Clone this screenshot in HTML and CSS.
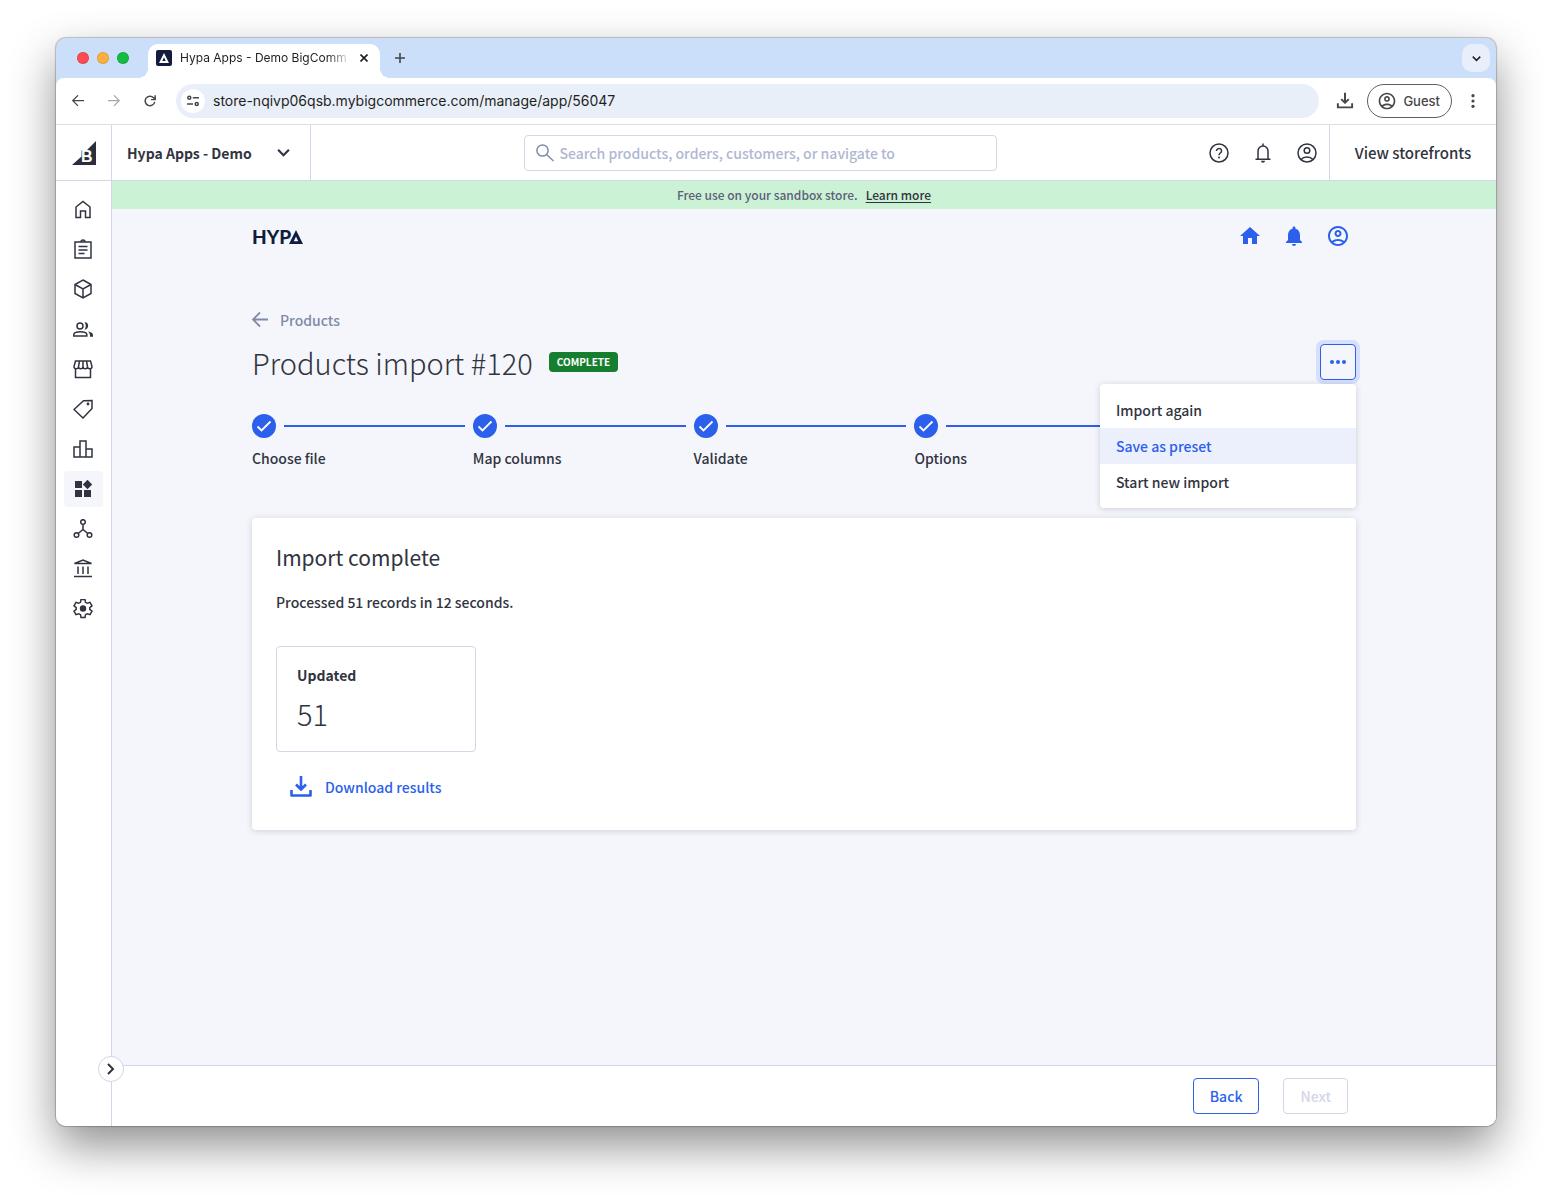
FILE: index.html
```html
<!DOCTYPE html>
<html lang="en">
<head>
<meta charset="utf-8">
<meta name="viewport" content="width=device-width, initial-scale=1">
<title>Hypa Apps - Demo BigCommerce</title>
<link rel="stylesheet" href="styles.css">
</head>
<body>
<svg class="sprite" aria-hidden="true">
  <symbol id="i-account" viewBox="0 0 24 24"><path fill="currentColor" d="M12 2C6.480 2 2 6.480 2 12s4.480 10 10 10 10-4.480 10-10S17.520 2 12 2zM7.350 18.500C8.660 17.560 10.260 17 12 17s3.340.56 4.650 1.500C15.340 19.440 13.740 20 12 20s-3.340-.56-4.650-1.500zm10.790-1.380C16.450 15.800 14.320 15 12 15s-4.450.8-6.140 2.120C4.700 15.730 4 13.950 4 12c0-4.420 3.580-8 8-8s8 3.580 8 8c0 1.950-.7 3.730-1.860 5.120zM12 6c-1.930 0-3.500 1.570-3.500 3.500S10.070 13 12 13s3.500-1.570 3.500-3.500S13.930 6 12 6zm0 5c-.83 0-1.500-.67-1.500-1.500S11.170 8 12 8s1.500.67 1.500 1.500S12.830 11 12 11z"/></symbol>
  <symbol id="i-download" viewBox="0 0 24 24"><path d="M12 1v13M7 9.500l5 5 5-5M2.500 15v5.500h19V15" fill="none" stroke="currentColor" stroke-width="2.600" stroke-linejoin="round"/></symbol>
  <symbol id="i-back" viewBox="0 0 16 16"><path d="M16 7.500H1.500M8 .5L1 7.500l7 7" fill="none" stroke="currentColor" stroke-width="1.800"/></symbol>
  <symbol id="i-check" viewBox="0 0 24 24"><circle cx="12" cy="12" r="12" fill="#2b5fec"/><path d="M5.500 12.500l4 4L18.500 7.500" fill="none" stroke="#fff" stroke-width="1.800"/></symbol>
  <symbol id="i-down" viewBox="0 0 12 12"><path d="M1 3.500l5 5 5-5" fill="none" stroke="currentColor" stroke-width="2"/></symbol>
</svg>
<div class="window">
  <div class="tabstrip">
    <div class="lights"><span class="light red"></span><span class="light amber"></span><span class="light green"></span></div>
    <div class="tab">
      <svg class="favicon" width="16" height="16" viewBox="0 0 16 16" aria-hidden="true"><rect width="16" height="16" rx="2" fill="#121c3e"/><path d="M8 3l5 10H3zM8 7.200L6.300 11h3.400z" fill="#fff" fill-rule="evenodd"/></svg>
      <span class="tab-title">Hypa Apps - Demo BigComm</span>
      <button class="icon-btn tab-close" aria-label="Close tab"><svg width="8" height="8" viewBox="0 0 8 8"><path d="M.5.5l7 7M7.500.5l-7 7" stroke="currentColor" stroke-width="1.600"/></svg></button>
    </div>
    <button class="icon-btn new-tab" aria-label="New tab"><svg width="10" height="10" viewBox="0 0 10 10"><path d="M5 0v10M0 5h10" stroke="currentColor" stroke-width="1.600"/></svg></button>
    <button class="icon-btn tab-search" aria-label="Search tabs"><svg width="9" height="9"><use href="#i-down"/></svg></button>
  </div>

  <div class="toolbar">
    <div class="nav-btns">
      <button class="icon-btn" aria-label="Back"><svg width="12" height="12"><use href="#i-back"/></svg></button>
      <button class="icon-btn faded flip" aria-label="Forward"><svg width="12" height="12"><use href="#i-back"/></svg></button>
      <button class="icon-btn" aria-label="Reload"><svg width="12" height="12" viewBox="0 0 13 13"><path d="M11.600 7.500A5.200 5.200 0 1 1 10.300 2.900L12 4.700M12.100.3v4.700H7.500" fill="none" stroke="currentColor" stroke-width="1.600"/></svg></button>
    </div>
    <label class="address">
      <span class="site-info"><svg width="12" height="12" viewBox="0 0 12 12"><g fill="none" stroke="currentColor" stroke-width="1.500"><circle cx="2.300" cy="2.800" r="1.500"/><path d="M5.800 2.800H12M0 9h6"/><circle cx="9.700" cy="9" r="1.500"/></g></svg></span>
      <input class="url" type="text" aria-label="Address" value="store-nqivp06qsb.mybigcommerce.com/manage/app/56047">
    </label>
    <button class="icon-btn downloads" aria-label="Downloads"><svg width="18" height="18"><use href="#i-download"/></svg></button>
    <button class="guest"><svg width="20" height="20"><use href="#i-account"/></svg>Guest</button>
    <button class="icon-btn kebab" aria-label="Menu"><svg width="4" height="14" viewBox="0 0 4 14"><g fill="currentColor"><circle cx="2" cy="1.700" r="1.600"/><circle cx="2" cy="7" r="1.600"/><circle cx="2" cy="12.300" r="1.600"/></g></svg></button>
  </div>

  <header class="appbar">
    <a class="bc-logo" href="#" aria-label="BigCommerce"><svg width="24" height="24" viewBox="0 0 24 24"><path d="M24 0v24H0l9.500-8.500V9.500h5z" fill="#2c2f3b"/><text x="9" y="21" class="bc-letter">B</text></svg></a>
    <button class="store">Hypa Apps - Demo<svg width="13" height="13" viewBox="0 0 12 12"><use href="#i-down"/></svg></button>
    <div class="search-wrap">
      <label class="search"><svg width="18" height="18" viewBox="0 0 18 18"><g fill="none" stroke="currentColor" stroke-width="1.500"><circle cx="6.500" cy="6.500" r="5.600"/><path d="M10.500 10.500l7 6.500"/></g></svg><input type="text" aria-label="Search" placeholder="Search products, orders, customers, or navigate to"></label>
    </div>
    <div class="appbar-icons">
      <button class="icon-btn" aria-label="Help"><svg width="20" height="20" viewBox="0 0 20 20"><g fill="none" stroke="currentColor" stroke-width="1.500"><circle cx="10" cy="10" r="9"/><path d="M7.500 8a2.500 2.500 0 1 1 3.900 2c-.9.700-1.400 1.100-1.400 2.200"/></g><circle cx="10" cy="14.500" r="1" fill="currentColor"/></svg></button>
      <button class="icon-btn" aria-label="Notifications"><svg width="16" height="20" viewBox="0 0 16 20"><path d="M.5 16.200h15M3 16V8a5 5 0 0 1 10 0v8M8 .5V3" fill="none" stroke="currentColor" stroke-width="1.500"/><path d="M6 17.700h4a2 2 0 0 1-4 0z" fill="currentColor"/></svg></button>
      <button class="icon-btn" aria-label="Account"><svg width="20" height="20" viewBox="0 0 20 20"><g fill="none" stroke="currentColor" stroke-width="1.500"><circle cx="10" cy="10" r="9"/><circle cx="10" cy="7.500" r="2.800"/><path d="M4 16.500c3-3.400 9-3.400 12 0"/></g></svg></button>
    </div>
    <a class="storefronts" href="#">View storefronts</a>
  </header>

  <div class="body">
    <nav class="sidebar" aria-label="Main">
      <a href="#" aria-label="Home"><svg width="20" height="20" viewBox="0 0 20 20"><path d="M3 8L10 2.500l7 5.500v10.500h-4.500V12h-5v6.500H3z"/></svg></a>
      <a href="#" aria-label="Orders"><svg width="20" height="20" viewBox="0 0 20 20"><path d="M2 3h16v16H2zM5.500 7.500h9M5.500 11h9M5.500 14.500h6M8 3a2 2 0 0 1 4 0"/></svg></a>
      <a href="#" aria-label="Products"><svg width="20" height="20" viewBox="0 0 20 20"><path d="M10 1l8 4.500v9L10 19l-8-4.500v-9zM2 5.500l8 4.500 8-4.500M10 10v9"/></svg></a>
      <a href="#" aria-label="Customers"><svg width="22" height="20" viewBox="0 0 22 20"><circle cx="8" cy="7" r="3"/><path d="M1.800 17v-1.800c1.200-3.200 11.800-3.200 13 0V17z"/><path class="fill" d="M12.500 3.300c4.300-.8 5.500 6.800 0 7.400 1.700-2.200 1.700-5 0-7.400zM16 12.500c3 .5 5 1.500 5 3.500v1.800h-3c.3-2-.3-3.800-2-5.300z"/></svg></a>
      <a href="#" aria-label="Storefront"><svg width="20" height="20" viewBox="0 0 20 20"><path d="M2.500 10v8.500h15V10M2.500 2h15L19 7.500c0 3-4.500 3-4.500 0 0 3-4.500 3-4.500 0 0 3-4.500 3-4.500 0 0 3-4.500 3-4.500 0zM6.500 2l-1 5.500M10 2v5.500M13.500 2l1 5.500"/></svg></a>
      <a href="#" aria-label="Marketing"><svg width="20" height="20" viewBox="0 0 20 20"><path d="M10.500 1.800L19 1.500v8l-9 9.500-9-8.500z"/><circle class="fill" cx="15" cy="5" r="1.400"/></svg></a>
      <a href="#" aria-label="Analytics"><svg width="20" height="20" viewBox="0 0 20 20"><path d="M7 18H1V8h6M7 18V2h6v16zM13 10h6v8h-6"/></svg></a>
      <a href="#" class="active" aria-label="Apps" aria-current="page"><svg width="20" height="20" viewBox="0 0 20 20"><path class="fill" d="M2 2h7v7H2zM2 11h7v7H2zM11 11h7v7h-7zM14.500.8l4.700 4.700-4.700 4.700-4.700-4.700z"/></svg></a>
      <a href="#" aria-label="Channels"><svg width="20" height="20" viewBox="0 0 20 20"><circle cx="10" cy="3" r="2.300"/><circle cx="3.500" cy="16" r="2.300"/><circle cx="16.500" cy="16" r="2.300"/><path d="M10 5.500v5M5.200 14.500l4.800-4 4.800 4"/></svg></a>
      <a href="#" aria-label="Capital"><svg width="20" height="20" viewBox="0 0 20 20"><path d="M1 17.500h18M5 7.500V15M10 7.500V15M15 7.500V15M1.500 4.500L10 1l8.500 3.500z"/></svg></a>
      <a href="#" aria-label="Settings"><svg width="20" height="20" viewBox="0 0 20 20"><path d="M8 .5h4l.5 2.800 1.800 1 2.700-1 2 3.500-2.200 1.800v1.800l2.200 1.800-2 3.500-2.700-1-1.800 1-.5 2.800H8l-.5-2.800-1.800-1-2.700 1-2-3.500 2.200-1.800V8.600L1 6.800l2-3.500 2.700 1 1.800-1z"/><circle class="fill" cx="10" cy="9.500" r="3.200"/></svg></a>
      <button class="expand" aria-label="Expand menu"><svg width="8" height="12" viewBox="0 0 8 12"><path d="M1 1l5 5-5 5" fill="none" stroke="currentColor" stroke-width="2"/></svg></button>
    </nav>

    <div class="content">
      <div class="banner">Free use on your sandbox store. <a href="#">Learn more</a></div>
      <div class="container">
        <header class="brandbar">
          <a class="hypa" href="#" aria-label="Hypa">HYP<svg width="14" height="14" viewBox="0 0 14 14"><path d="M7 0l7 14H0zM7 6.500l-2.200 4.700h4.400z" fill="currentColor" fill-rule="evenodd"/></svg></a>
          <div class="brand-icons">
            <a href="#" aria-label="Home"><svg width="24" height="24" viewBox="0 0 24 24"><path d="M10 20v-6h4v6h5v-8h3L12 3 2 12h3v8z" fill="currentColor"/></svg></a>
            <a href="#" aria-label="Notifications"><svg width="24" height="24" viewBox="0 0 24 24"><path d="M12 22c1.100 0 2-.9 2-2h-4c0 1.100.9 2 2 2zm6-6v-5c0-3.070-1.630-5.640-4.500-6.320V4c0-.83-.67-1.500-1.500-1.500s-1.500.67-1.500 1.500v.68C7.640 5.360 6 7.920 6 11v5l-2 2v1h16v-1l-2-2z" fill="currentColor"/></svg></a>
            <a href="#" aria-label="Account"><svg width="24" height="24"><use href="#i-account"/></svg></a>
          </div>
        </header>

        <main>
          <a class="crumb" href="#"><svg width="16" height="16"><use href="#i-back"/></svg>Products</a>
          <div class="title-row">
            <h1>Products import #120</h1>
            <span class="badge">COMPLETE</span>
            <div class="actions">
              <button class="more" aria-label="More actions" aria-expanded="true"><svg width="16" height="4" viewBox="0 0 16 4"><g fill="currentColor"><circle cx="2" cy="2" r="2"/><circle cx="8" cy="2" r="2"/><circle cx="14" cy="2" r="2"/></g></svg></button>
              <div class="menu" role="menu">
                <button role="menuitem">Import again</button>
                <button role="menuitem" class="highlighted">Save as preset</button>
                <button role="menuitem">Start new import</button>
              </div>
            </div>
          </div>

          <ol class="steps">
            <li><span class="track"><svg width="24" height="24"><use href="#i-check"/></svg></span>Choose file</li>
            <li><span class="track"><svg width="24" height="24"><use href="#i-check"/></svg></span>Map columns</li>
            <li><span class="track"><svg width="24" height="24"><use href="#i-check"/></svg></span>Validate</li>
            <li><span class="track"><svg width="24" height="24"><use href="#i-check"/></svg></span>Options</li>
            <li><span class="track last"><svg width="24" height="24"><use href="#i-check"/></svg></span></li>
          </ol>

          <section class="card">
            <h2>Import complete</h2>
            <p>Processed 51 records in 12 seconds.</p>
            <div class="stat"><h3>Updated</h3><span class="stat-value">51</span></div>
            <button class="download"><svg width="24" height="24"><use href="#i-download"/></svg>Download results</button>
          </section>
        </main>
      </div>
      <footer class="footer">
        <div class="footer-inner">
          <button class="btn">Back</button>
          <button class="btn" disabled>Next</button>
        </div>
      </footer>
    </div>
  </div>
</div>
</body>
</html>
```
FILE: styles.css
```css
* { box-sizing: border-box; }

:root {
  --blue: #2b5fec;
  --ink: #313440;
  --line: #d3d6e6;
  --pale: #f4f6fc;
  --ui: "Noto Sans CJK SC", sans-serif;
  --chrome: Inter, sans-serif;
}

body {
  margin: 0;
  min-height: 100vh;
  padding: 38px 56px 74px;
  display: flex;
  background: #fff;
  color: var(--ink);
  font: 500 14px/20px var(--ui);
}

h1, h2, h3, p, ol { margin: 0; padding: 0; }
a { color: inherit; text-decoration: none; }
button, input { font: inherit; color: inherit; margin: 0; padding: 0; border: 0; background: none; outline: 0; }
svg { display: block; flex: none; }
.sprite { position: absolute; width: 0; height: 0; }

.window {
  flex: 1;
  min-width: 0;
  display: flex;
  flex-direction: column;
  border-radius: 10px;
  overflow: hidden;
  background: #cbdffb;
  box-shadow: 0 0 1px 1px rgba(0, 0, 0, .22), 0 20px 46px rgba(0, 0, 0, .44);
}

.icon-btn { display: flex; align-items: center; justify-content: center; }

/* Browser tabs */
.tabstrip {
  height: 40px;
  display: flex;
  align-items: center;
  padding: 0 6px 0 21px;
  font-family: var(--chrome);
  font-weight: 400;
}
.lights { display: flex; gap: 8px; margin-right: 19px; }
.light { width: 12px; height: 12px; border-radius: 50%; border: 1px solid rgba(0, 0, 0, .12); }
.red { background: #fe4c50; }
.amber { background: #feb03e; }
.green { background: #13bd40; }
.tab {
  position: relative;
  align-self: flex-end;
  width: 232px;
  height: 34px;
  padding: 0 11px 6px 8px;
  display: flex;
  align-items: center;
  gap: 8px;
  border-radius: 10px 10px 0 0;
  background: #fff;
}
.tab::before, .tab::after {
  content: "";
  position: absolute;
  bottom: 0;
  width: 10px;
  height: 10px;
}
.tab::before { right: 100%; background: radial-gradient(circle at 0 0, transparent 10px, #fff 10px); }
.tab::after { left: 100%; background: radial-gradient(circle at 100% 0, transparent 10px, #fff 10px); }
.tab-title {
  flex: 1;
  white-space: nowrap;
  font-size: 12px;
  color: #1f1f1f;
  mask-image: linear-gradient(to right, #000 86%, transparent);
}
.tab-close { width: 10px; color: #1f1f1f; }
.new-tab { width: 20px; height: 20px; margin-left: 10px; color: #444; }
.tab-search { width: 28px; height: 28px; margin-left: auto; border-radius: 10px; background: #e8effa; color: #1f1f1f; }

/* Browser toolbar */
.toolbar {
  height: 47px;
  display: flex;
  align-items: center;
  padding: 0 15px 1px 12px;
  border-bottom: 1px solid #dcdde1;
  border-radius: 8px 8px 0 0;
  background: #fff;
  font-family: var(--chrome);
  color: #474747;
}
.nav-btns { display: flex; gap: 16px; }
.nav-btns .icon-btn { width: 20px; height: 20px; }
.nav-btns .faded { color: #a8a8a8; }
.flip svg { transform: scaleX(-1); }
.address {
  flex: 1;
  height: 34px;
  display: flex;
  align-items: center;
  gap: 8px;
  margin-left: 16px;
  padding: 0 5px;
  border-radius: 17px;
  background: #e9eff9;
}
.site-info { width: 24px; height: 24px; display: grid; place-items: center; border-radius: 50%; background: #fff; }
.url { flex: 1; min-width: 0; font-size: 14px; font-weight: 400; color: #1f1f1f; }
.downloads { margin: 0 13px 0 17px; }
.guest {
  height: 34px;
  display: flex;
  align-items: center;
  gap: 6px;
  padding: 0 11px 0 9px;
  border: 1px solid #5f6063;
  border-radius: 17px;
  font-size: 13px;
}
.kebab { width: 16px; height: 20px; margin-left: 13px; }

/* Admin header */
.appbar { height: 56px; display: flex; align-items: stretch; border-bottom: 1px solid var(--line); background: #fff; }
.bc-logo { width: 56px; display: grid; place-items: center; border-right: 1px solid var(--line); }
.bc-letter { font: 700 16px "Liberation Sans", sans-serif; fill: #fff; }
.store {
  width: 199px;
  display: flex;
  align-items: center;
  justify-content: space-between;
  padding: 0 20px 0 15px;
  border-right: 1px solid var(--line);
  font-weight: 700;
}
.search-wrap { flex: 1; display: flex; align-items: center; justify-content: center; }
.search {
  width: 473px;
  height: 36px;
  display: flex;
  align-items: center;
  gap: 6px;
  padding: 0 11px;
  border: 1px solid var(--line);
  border-radius: 4px;
  color: #808aad;
}
.search input { flex: 1; min-width: 0; }
.search input::placeholder { color: #b0b7d1; opacity: 1; }
.appbar-icons { display: flex; align-items: center; gap: 26px; padding-right: 12px; }
.storefronts { width: 167px; display: grid; place-items: center; border-left: 1px solid var(--line); font-size: 15px; }

/* Admin body */
.body { flex: 1; display: flex; min-height: 0; background: #fff; }
.sidebar {
  position: relative;
  width: 56px;
  display: flex;
  flex-direction: column;
  gap: 4px;
  padding: 10px 8px;
  border-right: 1px solid var(--line);
}
.sidebar a { height: 36px; padding-right: 1px; display: grid; place-items: center; border-radius: 4px; }
.sidebar a svg { fill: none; stroke: #313440; stroke-width: 1.5; }
.sidebar .fill { fill: #313440; stroke: none; }
.sidebar .active { background: var(--pale); }
.expand {
  position: absolute;
  right: -13px;
  bottom: 44px;
  width: 26px;
  height: 26px;
  display: grid;
  place-items: center;
  border: 1px solid var(--line);
  border-radius: 50%;
  background: #fff;
}

.content { flex: 1; min-width: 0; display: flex; flex-direction: column; background: var(--pale); }
.banner {
  height: 28px;
  display: flex;
  align-items: center;
  justify-content: center;
  gap: 8px;
  background: #ccf2d6;
  color: #5b6079;
  font-size: 12px;
}
.banner a { color: var(--ink); text-decoration: underline; text-underline-offset: 2px; }

.container { flex: 1; width: 100%; max-width: 1152px; margin: 0 auto; padding: 0 24px; }
.brandbar { height: 54px; display: flex; align-items: center; justify-content: space-between; padding-right: 6px; }
.hypa { display: flex; align-items: center; padding-top: 2px; font: 900 19px/20px Lato, sans-serif; color: #121c3e; }
.hypa svg { margin-left: -2px; }
.brand-icons { display: flex; gap: 20px; color: var(--blue); }

main { padding: 47px 0; }
.crumb { display: flex; align-items: center; gap: 12px; width: max-content; color: #808aa8; }
.title-row { height: 36px; display: flex; align-items: center; margin-top: 14px; }
h1 { font-size: 29px; line-height: 36px; font-weight: 300; }
.badge {
  margin-left: 16px;
  padding: 0 8px;
  border-radius: 4px;
  background: #167f2f;
  color: #fff;
  font-size: 10px;
  font-weight: 700;
}
.actions { position: relative; margin-left: auto; }
.more {
  width: 36px;
  height: 36px;
  display: grid;
  place-items: center;
  border: 1px solid var(--blue);
  border-radius: 4px;
  color: var(--blue);
  box-shadow: 0 0 0 4px #d6dffb;
}
.menu {
  position: absolute;
  z-index: 2;
  top: 40px;
  right: 0;
  width: 256px;
  padding: 8px 0;
  border-radius: 4px;
  background: #fff;
  box-shadow: 0 1px 6px rgba(49, 52, 64, .2);
}
.menu button { display: block; width: 100%; height: 36px; padding: 0 16px; text-align: left; }
.menu .highlighted { background: #ecf0fc; color: var(--blue); }

.steps { display: grid; grid-template-columns: repeat(5, 1fr); margin-top: 34px; list-style: none; }
.track { display: flex; align-items: center; gap: 8px; padding-right: 8px; margin-bottom: 10px; }
.track::after { content: ""; flex: 1; height: 2px; background: var(--blue); }
.track.last::after { display: none; }

.card {
  margin-top: 50px;
  padding: 24px;
  border-radius: 4px;
  background: #fff;
  box-shadow: 0 1px 6px rgba(49, 52, 64, .2);
}
h2 { font-size: 21px; line-height: 30px; font-weight: 400; }
.card p { margin-top: 18px; line-height: 24px; }
.stat { width: 200px; margin-top: 32px; padding: 16px 20px; border: 1px solid var(--line); border-radius: 4px; }
h3 { font-size: 14px; line-height: 24px; font-weight: 700; }
.stat-value { display: block; margin: 6px 0 2px; font-size: 29px; line-height: 40px; font-weight: 300; }
.download {
  height: 36px;
  display: flex;
  align-items: center;
  gap: 12px;
  margin: 17px 0 1px;
  padding: 0 13px;
  color: var(--blue);
}

.footer { border-top: 1px solid var(--line); background: #fff; }
.footer-inner { max-width: 1152px; margin: 0 auto; padding: 12px 32px; display: flex; justify-content: flex-end; gap: 24px; }
.btn { height: 36px; padding: 0 16px; border: 1px solid var(--blue); border-radius: 4px; color: var(--blue); }
.btn:disabled { border-color: var(--line); color: var(--line); }
```
